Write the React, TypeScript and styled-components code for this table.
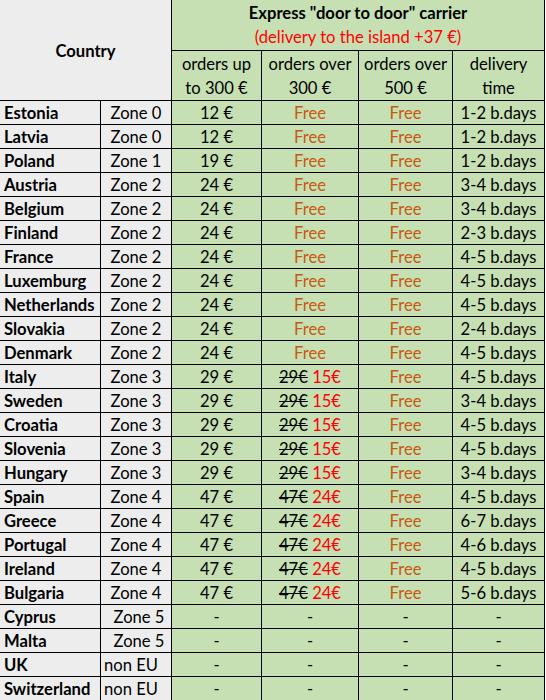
import styled, { createGlobalStyle } from "styled-components";

const GlobalStyle = createGlobalStyle`
  body {
    margin: 0;
    background: #ffffff;
  }
`;

type Offer = "free" | "none" | { old: string; now: string };

type Row = {
  country: string;
  zone: string;
  zoneAlign?: "center" | "indent" | "left";
  price: string;
  over300: Offer;
  over500: Offer;
  time: string;
};

const cheap = (price: string): Omit<Row, "country" | "zone" | "time"> => ({
  price: price + " €",
  over300: "free",
  over500: "free",
});

const discount = (price: string, now: string): Omit<Row, "country" | "zone" | "time"> => ({
  price: price + " €",
  over300: { old: price + "€", now: now + "€" },
  over500: "free",
});

const nothing: Omit<Row, "country" | "zone" | "time"> = {
  price: "-",
  over300: "none",
  over500: "none",
};

const rows: Row[] = [
  { country: "Estonia", zone: "Zone 0", ...cheap("12"), time: "1-2 b.days" },
  { country: "Latvia", zone: "Zone 0", ...cheap("12"), time: "1-2 b.days" },
  { country: "Poland", zone: "Zone 1", ...cheap("19"), time: "1-2 b.days" },
  { country: "Austria", zone: "Zone 2", ...cheap("24"), time: "3-4 b.days" },
  { country: "Belgium", zone: "Zone 2", ...cheap("24"), time: "3-4 b.days" },
  { country: "Finland", zone: "Zone 2", ...cheap("24"), time: "2-3 b.days" },
  { country: "France", zone: "Zone 2", ...cheap("24"), time: "4-5 b.days" },
  { country: "Luxemburg", zone: "Zone 2", ...cheap("24"), time: "4-5 b.days" },
  { country: "Netherlands", zone: "Zone 2", ...cheap("24"), time: "4-5 b.days" },
  { country: "Slovakia", zone: "Zone 2", ...cheap("24"), time: "2-4 b.days" },
  { country: "Denmark", zone: "Zone 2", ...cheap("24"), time: "4-5 b.days" },
  { country: "Italy", zone: "Zone 3", ...discount("29", "15"), time: "4-5 b.days" },
  { country: "Sweden", zone: "Zone 3", ...discount("29", "15"), time: "3-4 b.days" },
  { country: "Croatia", zone: "Zone 3", ...discount("29", "15"), time: "4-5 b.days" },
  { country: "Slovenia", zone: "Zone 3", ...discount("29", "15"), time: "4-5 b.days" },
  { country: "Hungary", zone: "Zone 3", ...discount("29", "15"), time: "3-4 b.days" },
  { country: "Spain", zone: "Zone 4", ...discount("47", "24"), time: "4-5 b.days" },
  { country: "Greece", zone: "Zone 4", ...discount("47", "24"), time: "6-7 b.days" },
  { country: "Portugal", zone: "Zone 4", ...discount("47", "24"), time: "4-6 b.days" },
  { country: "Ireland", zone: "Zone 4", ...discount("47", "24"), time: "4-5 b.days" },
  { country: "Bulgaria", zone: "Zone 4", ...discount("47", "24"), time: "5-6 b.days" },
  { country: "Cyprus", zone: "Zone 5", zoneAlign: "indent", ...nothing, time: "-" },
  { country: "Malta", zone: "Zone 5", zoneAlign: "indent", ...nothing, time: "-" },
  { country: "UK", zone: "non EU", zoneAlign: "left", ...nothing, time: "-" },
  { country: "Switzerland", zone: "non EU", zoneAlign: "left", ...nothing, time: "-" },
];

const Table = styled.table`
  border-collapse: separate;
  border-spacing: 0;
  table-layout: fixed;
  width: 545px;
  font-family: Lato, "Open Sans", sans-serif;
  font-size: 16.6px;
  color: #000000;
`;

const HeadRow = styled.tr<{ tall?: boolean }>`
  height: ${(p) => (p.tall ? "51px" : "49px")};
`;

const BodyRow = styled.tr`
  height: 24px;
`;

const Cell = styled.td<{ tone?: "gray" | "green" }>`
  padding: 2px 0 0;
  border-right: 1px solid #000000;
  border-bottom: 1px solid #000000;
  background: ${(p) => (p.tone === "gray" ? "#ededed" : "#c6e0b4")};
  line-height: 21px;
  text-align: center;
  white-space: nowrap;
  overflow: hidden;
`;

const CountryHead = styled(Cell)`
  font-weight: 700;
`;

const CarrierHead = styled(Cell)`
  padding-top: 1px;
  line-height: 24px;
  vertical-align: top;
`;

const ColumnHead = styled(Cell)`
  padding-top: 1px;
  line-height: 24px;
  white-space: normal;
`;

const Title = styled.div`
  font-weight: 700;
`;

const Note = styled.div`
  color: #ff0000;
`;

const CountryCell = styled(Cell)`
  font-weight: 700;
  text-align: left;
  padding-left: 4px;
`;

const ZoneCell = styled(Cell)<{ align?: "center" | "indent" | "left" }>`
  text-align: ${(p) => (p.align === "left" ? "left" : "center")};
  padding-left: ${(p) => (p.align === "left" ? "3px" : p.align === "indent" ? "6px" : "0")};
`;

const Free = styled.span`
  color: #c65911;
`;

const Old = styled.span`
  text-decoration: line-through;
`;

const New = styled.span`
  color: #ff0000;
`;

const OfferValue = ({ offer }: { offer: Offer }) => {
  if (offer === "free") return <Free>Free</Free>;
  if (offer === "none") return <>-</>;
  return (
    <>
      <Old>{offer.old}</Old> <New>{offer.now}</New>
    </>
  );
};

export default function App() {
  return (
    <>
      <GlobalStyle />
      <Table>
        <colgroup>
          <col style={{ width: 101 }} />
          <col style={{ width: 71 }} />
          <col style={{ width: 90 }} />
          <col style={{ width: 97 }} />
          <col style={{ width: 94 }} />
          <col style={{ width: 92 }} />
        </colgroup>
        <thead>
          <HeadRow tall>
            <CountryHead tone="gray" rowSpan={2} colSpan={2}>
              Country
            </CountryHead>
            <CarrierHead colSpan={4}>
              <Title>Express "door to door" carrier</Title>
              <Note>(delivery to the island +37 €)</Note>
            </CarrierHead>
          </HeadRow>
          <HeadRow>
            <ColumnHead>
              orders up
              <br />
              to 300 €
            </ColumnHead>
            <ColumnHead>
              orders over
              <br />
              300 €
            </ColumnHead>
            <ColumnHead>
              orders over
              <br />
              500 €
            </ColumnHead>
            <ColumnHead>
              delivery
              <br />
              time
            </ColumnHead>
          </HeadRow>
        </thead>
        <tbody>
          {rows.map((r) => (
            <BodyRow key={r.country}>
              <CountryCell tone="gray">{r.country}</CountryCell>
              <ZoneCell tone="gray" align={r.zoneAlign}>
                {r.zone}
              </ZoneCell>
              <Cell>{r.price}</Cell>
              <Cell>
                <OfferValue offer={r.over300} />
              </Cell>
              <Cell>
                <OfferValue offer={r.over500} />
              </Cell>
              <Cell>{r.time}</Cell>
            </BodyRow>
          ))}
        </tbody>
      </Table>
    </>
  );
}
